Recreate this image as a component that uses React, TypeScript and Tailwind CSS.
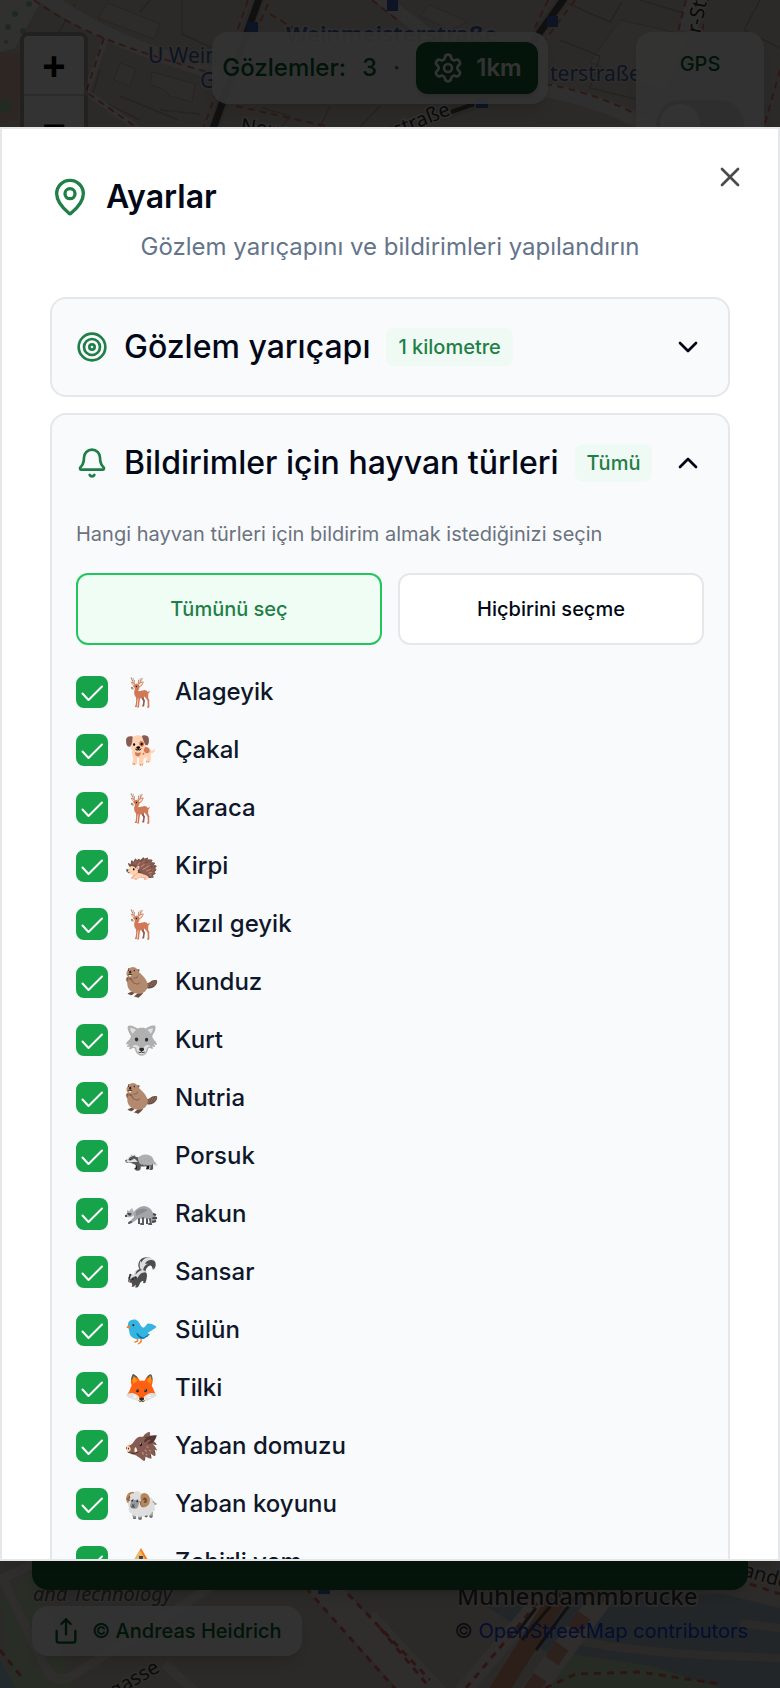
import { useState } from "react";
import {
  Bell,
  ChevronDown,
  ChevronUp,
  MapPin,
  Settings,
  Share,
  Target,
  X,
} from "lucide-react";

type Species = {
  id: string;
  icon: React.ReactNode;
  name: string;
};

const RaccoonIcon = () => (
  <svg className="h-8 w-[35px]" viewBox="0 0 35 32" aria-hidden="true">
    {/* tail */}
    <path d="M27 14Q31 15 32 19Q33 23 30 25Q27 24 27 20Z" fill="#9c9da1" />
    <path
      d="M29 16L32 17M28 20L33 20M28 24L32 23"
      stroke="#46474b"
      strokeWidth="2"
    />
    {/* far legs */}
    <path
      d="M15 20L15 26M23 20L23 26"
      stroke="#55565a"
      strokeWidth="2"
      fill="none"
    />
    {/* body */}
    <path
      d="M9 15Q13 9 20 8Q27 9 29 15Q29 21 27 22L22 20Q18 22 15 20L8 25L5 24L10 19Z"
      fill="#a3a4a8"
    />
    <path d="M12 13Q18 9 24 12Q19 15 12 18Z" fill="#8b8c90" />
    <path
      d="M7 24L5 25M19 20L19 26L17 26M26 21L27 26L25 26"
      stroke="#5a5b5f"
      strokeWidth="2"
      strokeLinecap="round"
      fill="none"
    />
    {/* head */}
    <path
      d="M3 12L5 13L8 10L10 14Q11 18 7 19Q3 20 1 18L3 15Z"
      fill="#b5b6ba"
    />
    <path d="M3 15Q6 14 8 16L6 18L4 17Z" fill="#4b4c50" />
    <circle cx="2" cy="18" r="1" fill="#222" />
  </svg>
);

const WarningIcon = () => (
  <svg className="h-8 w-[35px]" viewBox="0 0 35 32" aria-hidden="true">
    <path
      d="M17 2L32 28Q32 30 30 30H4Q2 30 2 28Z"
      fill="#f97a1f"
      strokeLinejoin="round"
    />
    <path d="M16 4L29 28H4Q2 28 3 26Z" fill="#e8bb68" />
    <path d="M15 10H19L18 22H16Z" fill="#3b3b40" />
    <circle cx="17" cy="25" r="2" fill="#3b3b40" />
  </svg>
);

const SPECIES: Species[] = [
  { id: "alageyik", icon: "🦌", name: "Alageyik" },
  { id: "cakal", icon: "🐕", name: "Çakal" },
  { id: "karaca", icon: "🦌", name: "Karaca" },
  { id: "kirpi", icon: "🦔", name: "Kirpi" },
  { id: "kizil-geyik", icon: "🦌", name: "Kızıl geyik" },
  { id: "kunduz", icon: "🦫", name: "Kunduz" },
  { id: "kurt", icon: "🐺", name: "Kurt" },
  { id: "nutria", icon: "🦫", name: "Nutria" },
  { id: "porsuk", icon: "🦡", name: "Porsuk" },
  { id: "rakun", icon: <RaccoonIcon />, name: "Rakun" },
  { id: "sansar", icon: "🦨", name: "Sansar" },
  { id: "sulun", icon: "🐦", name: "Sülün" },
  { id: "tilki", icon: "🦊", name: "Tilki" },
  { id: "yaban-domuzu", icon: "🐗", name: "Yaban domuzu" },
  { id: "yaban-koyunu", icon: "🐏", name: "Yaban koyunu" },
  { id: "zehirli-yem", icon: <WarningIcon />, name: "Zehirli yem" },
];

const MapBackground = () => (
  <svg
    className="absolute inset-0 h-full w-full"
    viewBox="0 0 780 1688"
    preserveAspectRatio="xMidYMid slice"
    aria-hidden="true"
  >
    <rect width="780" height="1688" fill="#d9d0c9" />

    {/* north: Weinmeisterstraße */}
    <path d="M0 0H42L15 48L0 52Z" fill="#eeeeea" />
    <g fill="#9ccf9c">
      <circle cx="15" cy="14" r="3" />
      <circle cx="8" cy="27" r="3" />
      <circle cx="23" cy="31" r="3" />
      <circle cx="29" cy="4" r="3" />
      <circle cx="6" cy="42" r="2" />
    </g>
    <path d="M0 52L20 54V90L18 118L0 124Z" fill="#e3bfae" />
    <circle cx="5" cy="106" r="7" fill="#a9d3a4" />
    <g fill="#e4ddd6" stroke="#bfb5ab" strokeWidth="1">
      <path d="M108 3L160 24L154 39L98 18Z" />
      <path d="M120 63L136 69L130 86L114 80Z" />
      <path d="M152 72L195 84L192 102L170 96L165 90L150 84Z" />
      <path d="M620 20L690 36L664 92L590 62Z" />
      <path d="M430 5L468 22L450 30L420 16Z" />
    </g>
    <g fill="none" stroke="#b9aea4" strokeWidth="1.5">
      <path d="M75 4L58 34M150 0L140 12M182 0V34L230 56" />
      <path d="M100 70L92 96L140 120M120 96L178 120M160 110L200 114" />
      <path d="M560 0L610 22L622 2M640 0L700 18M744 30L780 48M744 30L760 0" />
      <path d="M560 40L600 56L590 88L640 100" />
      <path d="M262 108L290 116L282 127M330 106L320 127M380 106L360 127" />
    </g>
    <g fill="none" stroke="#f0ece8">
      <path d="M38 -8C80 22 120 46 220 74" strokeWidth="14" />
      <path d="M536 88C580 96 620 108 660 134" strokeWidth="14" />
      <path d="M370 -10L430 36" strokeWidth="12" />
      <path d="M106 38L86 92L140 130" strokeWidth="6" />
      <path d="M696 -5L688 32" strokeWidth="18" />
    </g>
    <g fill="none" stroke="#e07a70" strokeWidth="2" strokeDasharray="7 5">
      <path d="M34 0C76 30 116 46 214 74" />
      <path d="M104 38L86 92L140 130" />
      <path d="M248 0L204 127M268 4L214 127" />
      <path d="M372 0L400 22M548 0L520 60M575 0L530 60" />
      <path d="M545 84C590 92 630 108 656 127" />
      <path d="M686 0L678 32M708 0L702 32M392 127L470 104M236 106L330 127" />
      <path d="M780 70L764 127M270 14L300 32" />
    </g>
    <g fill="none" stroke="#c9c2bb" strokeWidth="12">
      <path d="M260 -4L212 132" />
      <path d="M566 -4L520 60" />
      <path d="M390 132L474 104" />
    </g>
    <g fill="none" stroke="#56534f" strokeWidth="7">
      <path d="M260 -4L212 132" />
      <path d="M566 -4L520 60" />
      <path d="M440 116L474 104" strokeWidth="4" />
    </g>
    <g fill="#3f67b8">
      <rect x="247" y="22" width="11" height="11" />
      <rect x="387" y="0" width="11" height="11" />
      <rect x="547" y="16" width="11" height="11" />
      <rect x="476" y="98" width="12" height="10" />
    </g>
    <g
      fontFamily="'Noto Sans', sans-serif"
      fill="#4466aa"
      stroke="#e8e2dc"
      strokeWidth="3"
      paintOrder="stroke"
    >
      <text x="286" y="42" fontSize="22" fontWeight="700">
        Weinmeisterstraße
      </text>
      <text x="148" y="63" fontSize="21">
        U Wein
      </text>
      <text x="200" y="88" fontSize="21">
        G
      </text>
      <text x="550" y="81" fontSize="21">
        terstraße
      </text>
    </g>
    <g
      fontFamily="'Noto Sans', sans-serif"
      fill="#33302e"
      stroke="#f4f0ec"
      strokeWidth="3"
      paintOrder="stroke"
      fontSize="20"
    >
      <text x="240" y="132" transform="rotate(8 240 132)">
        Neue
      </text>
      <text x="396" y="137" transform="rotate(-22 396 137)">
        straße
      </text>
      <text x="700" y="34" transform="rotate(-78 700 34)">
        r-St
      </text>
    </g>

    {/* south: Mühlendammbrücke */}
    <path d="M0 1600L36 1570L74 1688H12Z" fill="#c8dfb8" />
    <path d="M0 1660L16 1688H0Z" fill="#aad3df" />
    <path
      d="M486 1606L520 1600L780 1592V1688H660L560 1664L510 1622Z"
      fill="#aabfcb"
    />
    <path d="M570 1654L650 1666L720 1688H530Z" fill="#bfdcae" />
    <path d="M740 1560H780V1608L700 1588Z" fill="#ddd5cd" />
    <g fill="none" stroke="#d9d0c9" strokeLinecap="round">
      <path d="M584 1642C650 1654 720 1656 780 1658" strokeWidth="8" />
      <path d="M744 1624L780 1628" strokeWidth="8" />
    </g>
    <g fill="none" stroke="#eae5e0">
      <path d="M2 1578L48 1672Q58 1684 72 1676L164 1618L250 1560" strokeWidth="9" />
      <path d="M0 1580L40 1560M164 1664L196 1692" strokeWidth="9" />
      <path d="M318 1582L420 1692" strokeWidth="28" />
      <path d="M370 1616L440 1692" strokeWidth="14" />
      <path d="M462 1692L540 1600" strokeWidth="16" />
      <path d="M526 1700L606 1592" strokeWidth="22" />
    </g>
    <path
      d="M498 1692L556 1600"
      stroke="#d9977a"
      strokeWidth="19"
      fill="none"
    />
    <path
      d="M530 1692L600 1592"
      stroke="#dda58c"
      strokeWidth="16"
      strokeDasharray="18 20"
      fill="none"
    />
    <path
      d="M522 1640L562 1592M536 1650L576 1596M516 1634L536 1608"
      stroke="#56534f"
      strokeWidth="3"
      fill="none"
    />
    <g fill="none" stroke="#dd6f66" strokeWidth="3" strokeDasharray="7 6">
      <path d="M306 1588L398 1692M348 1594L430 1680" />
      <path d="M380 1628L430 1688M466 1688L540 1600" />
      <path d="M545 1688L576 1674L640 1672L720 1684M0 1650L24 1680" />
      <path d="M750 1584L780 1594" />
    </g>
    <rect x="318" y="1586" width="12" height="8" fill="#4a72c8" />
    <g
      fontFamily="'Noto Sans', sans-serif"
      stroke="#e8e2dc"
      strokeWidth="3"
      paintOrder="stroke"
      fill="#3d3a38"
    >
      <text x="33" y="1601" fontSize="20" fontStyle="italic" fill="#66605c">
        and Technology
      </text>
      <text x="457" y="1605" fontSize="24" fontWeight="500">
        Mühlendammbrücke
      </text>
      <text x="114" y="1698" fontSize="20" transform="rotate(-30 114 1698)">
        gasse
      </text>
      <text x="742" y="1576" fontSize="20" transform="rotate(16 742 1576)">
        ande
      </text>
    </g>
  </svg>
);

const MapScreen = () => (
  <div className="relative flex min-h-screen flex-col justify-between overflow-hidden">
    <MapBackground />
    <div className="relative flex items-start justify-between px-4 pt-8">
      <div className="ml-1 flex flex-col overflow-hidden rounded-lg border-4 border-black/20 bg-white bg-clip-padding text-[40px] font-bold text-black">
        <button
          className="h-15 w-15 border-b-2 border-gray-300 font-['Liberation_Sans',sans-serif] leading-15"
          aria-label="Yakınlaştır"
        >
          +
        </button>
        <button
          className="h-15 w-15 font-['Liberation_Sans',sans-serif] leading-15"
          aria-label="Uzaklaştır"
        >
          −
        </button>
      </div>

      <div className="ml-9 flex h-18 items-center rounded-2xl bg-white/90 px-2.5 text-2xl font-medium text-green-800 shadow-lg">
        <span>Gözlemler:</span>
        <span className="px-4">3</span>
        <span className="pr-4 text-gray-500">·</span>
        <button className="flex h-13 items-center gap-3 rounded-xl bg-[#166534] px-4 font-semibold text-white shadow-md">
          <Settings className="size-8" />
          1km
        </button>
      </div>

      <div className="flex w-32 flex-col items-center rounded-2xl bg-white/90 pt-4 pb-4 text-xl font-medium text-green-800 shadow-lg">
        <span className="mb-5 leading-8">GPS</span>
        <button
          role="switch"
          aria-checked="false"
          aria-label="GPS"
          className="h-12 w-22 rounded-full bg-gray-200 p-1"
        >
          <span className="block size-10 rounded-full bg-white" />
        </button>
      </div>
    </div>

    <div className="relative flex flex-col gap-4 px-8 pb-8">
      <button
        className="h-24 rounded-2xl bg-[#166534] shadow-lg"
        aria-label="Gözlem bildir"
      />
      <div className="flex items-center justify-between text-xl">
        <button className="flex items-center gap-3 rounded-2xl bg-white/90 px-5 py-3 leading-6.5 font-medium text-green-800 shadow-lg">
          <Share className="-my-1 size-7" />© Andreas Heidrich
        </button>
        <span className="text-gray-700">
          ©{" "}
          <a href="#" className="text-blue-700">
            OpenStreetMap contributors
          </a>
        </span>
      </div>
    </div>
  </div>
);

const Badge = ({ children }: { children: React.ReactNode }) => (
  <span className="rounded-lg bg-[#f0faf4] px-3 py-1 text-xl leading-7.5 text-[#1f7f47]">
    {children}
  </span>
);

type SectionProps = {
  icon: React.ReactNode;
  title: string;
  badge: string;
  open: boolean;
  onToggle: () => void;
  children?: React.ReactNode;
};

const Section = ({
  icon,
  title,
  badge,
  open,
  onToggle,
  children,
}: SectionProps) => (
  <section className="rounded-2xl border-2 border-gray-200 bg-[#f9fafc]">
    <button
      className="flex w-full items-center gap-4 p-6 text-left font-medium"
      aria-expanded={open}
      onClick={onToggle}
    >
      {icon}
      <span className="text-[32px] leading-12">{title}</span>
      <Badge>{badge}</Badge>
      {open ? (
        <ChevronUp className="ml-auto size-8" />
      ) : (
        <ChevronDown className="ml-auto size-8" />
      )}
    </button>
    {open && children}
  </section>
);

type SpeciesRowProps = {
  species: Species;
  checked: boolean;
  onChange: () => void;
};

const SpeciesRow = ({ species, checked, onChange }: SpeciesRowProps) => (
  <li className="flex h-8.5 items-center gap-4">
    <span className="grid">
      <input
        id={species.id}
        type="checkbox"
        checked={checked}
        onChange={onChange}
        className="col-start-1 row-start-1 size-8 appearance-none rounded-lg border-2 border-[#16a34a] bg-white checked:bg-[#16a34a]"
      />
      {checked && (
        <svg
          className="pointer-events-none col-start-1 row-start-1 size-8 text-white"
          viewBox="0 0 32 32"
          fill="none"
          stroke="currentColor"
          strokeWidth="2"
          strokeLinecap="round"
          strokeLinejoin="round"
        >
          <path d="M6.5 17.5L12.5 24L26 10.5" />
        </svg>
      )}
    </span>
    <label
      htmlFor={species.id}
      className="flex items-center gap-4 text-2xl font-medium text-[#0f172a]"
    >
      <span className="text-[28px] leading-8">{species.icon}</span>
      {species.name}
    </label>
  </li>
);

const App = () => {
  const [radiusOpen, setRadiusOpen] = useState(false);
  const [speciesOpen, setSpeciesOpen] = useState(true);
  const [selected, setSelected] = useState<string[]>(SPECIES.map((s) => s.id));

  const toggle = (id: string) => {
    setSelected((prev) =>
      prev.includes(id) ? prev.filter((s) => s !== id) : [...prev, id]
    );
  };

  const allSelected = selected.length === SPECIES.length;

  return (
    <div className="relative font-[Inter,sans-serif] text-[#020817]">
      <MapScreen />

      <div className="fixed inset-0 flex items-center bg-black/80">
        <div
          role="dialog"
          aria-labelledby="settings-title"
          className="relative h-[85vh] w-full overflow-y-auto border-2 border-gray-200 bg-white p-12 shadow-lg [scrollbar-width:none]"
        >
          <button
            className="absolute top-8 right-8 text-black opacity-70"
            aria-label="Kapat"
          >
            <X className="size-8" />
          </button>

          <header className="mb-8">
            <h2
              id="settings-title"
              className="flex items-center gap-4 text-[32px] leading-10 font-semibold"
            >
              <MapPin className="size-10 text-[#1f7f47]" />
              Ayarlar
            </h2>
            <p className="mt-3 text-center text-2xl leading-9 text-[#64748b]">
              Gözlem yarıçapını ve bildirimleri yapılandırın
            </p>
          </header>

          <div className="flex flex-col gap-4">
            <Section
              icon={<Target className="size-8 text-[#1f7f47]" />}
              title="Gözlem yarıçapı"
              badge="1 kilometre"
              open={radiusOpen}
              onToggle={() => setRadiusOpen(!radiusOpen)}
            />

            <Section
              icon={<Bell className="size-8 text-[#1f7f47]" />}
              title="Bildirimler için hayvan türleri"
              badge={allSelected ? "Tümü" : String(selected.length)}
              open={speciesOpen}
              onToggle={() => setSpeciesOpen(!speciesOpen)}
            >
              <div className="px-6 pt-2 pb-6">
                <p className="text-xl leading-7.5 text-[#6b7280]">
                  Hangi hayvan türleri için bildirim almak istediğinizi seçin
                </p>
                <div className="mt-6 grid grid-cols-2 gap-4 text-xl font-medium">
                  <button
                    className="h-18 rounded-xl border-2 border-[#22c55e] bg-green-50 text-[#1f7f47]"
                    onClick={() => setSelected(SPECIES.map((s) => s.id))}
                  >
                    Tümünü seç
                  </button>
                  <button
                    className="h-18 rounded-xl border-2 border-gray-200 bg-white"
                    onClick={() => setSelected([])}
                  >
                    Hiçbirini seçme
                  </button>
                </div>
                <ul className="mt-7.5 flex flex-col gap-6">
                  {SPECIES.map((species) => (
                    <SpeciesRow
                      key={species.id}
                      species={species}
                      checked={selected.includes(species.id)}
                      onChange={() => toggle(species.id)}
                    />
                  ))}
                </ul>
              </div>
            </Section>
          </div>
        </div>
      </div>
    </div>
  );
};

export default App;
